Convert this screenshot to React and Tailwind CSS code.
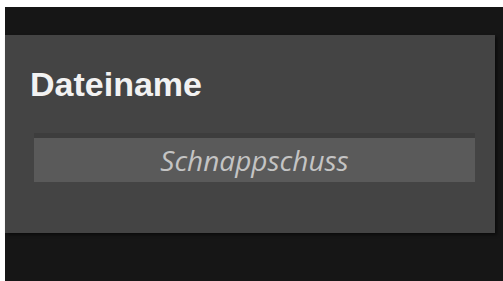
export default function App() {
  return (
    <div className="h-[281px] w-[503px] overflow-hidden bg-white pl-[5px] pt-[7px]">
      <div className="flex h-full w-full flex-col bg-[#161616] pt-[28px]">
        <div className="flex h-[198px] w-[490px] flex-col bg-[#444444] pl-[29px] pr-[20px] pt-[29px] shadow-[2px_2px_3px_rgba(0,0,0,0.5)]">
          <div
            className="-ml-[4px] text-[34px] font-bold leading-[40px] text-[#f2f2f2]"
            style={{ fontFamily: '"Liberation Sans", Arial, sans-serif' }}
          >
            Dateiname
          </div>
          <div className="mt-[29px] border-t-[5px] border-[#3d3d3d]">
            <div
              className="flex h-[44px] items-center justify-center bg-[#5a5a5a] text-[28px] italic text-[#c4c4c4]"
              style={{ fontFamily: '"Open Sans", sans-serif' }}
            >
              Schnappschuss
            </div>
          </div>
        </div>
      </div>
    </div>
  )
}
